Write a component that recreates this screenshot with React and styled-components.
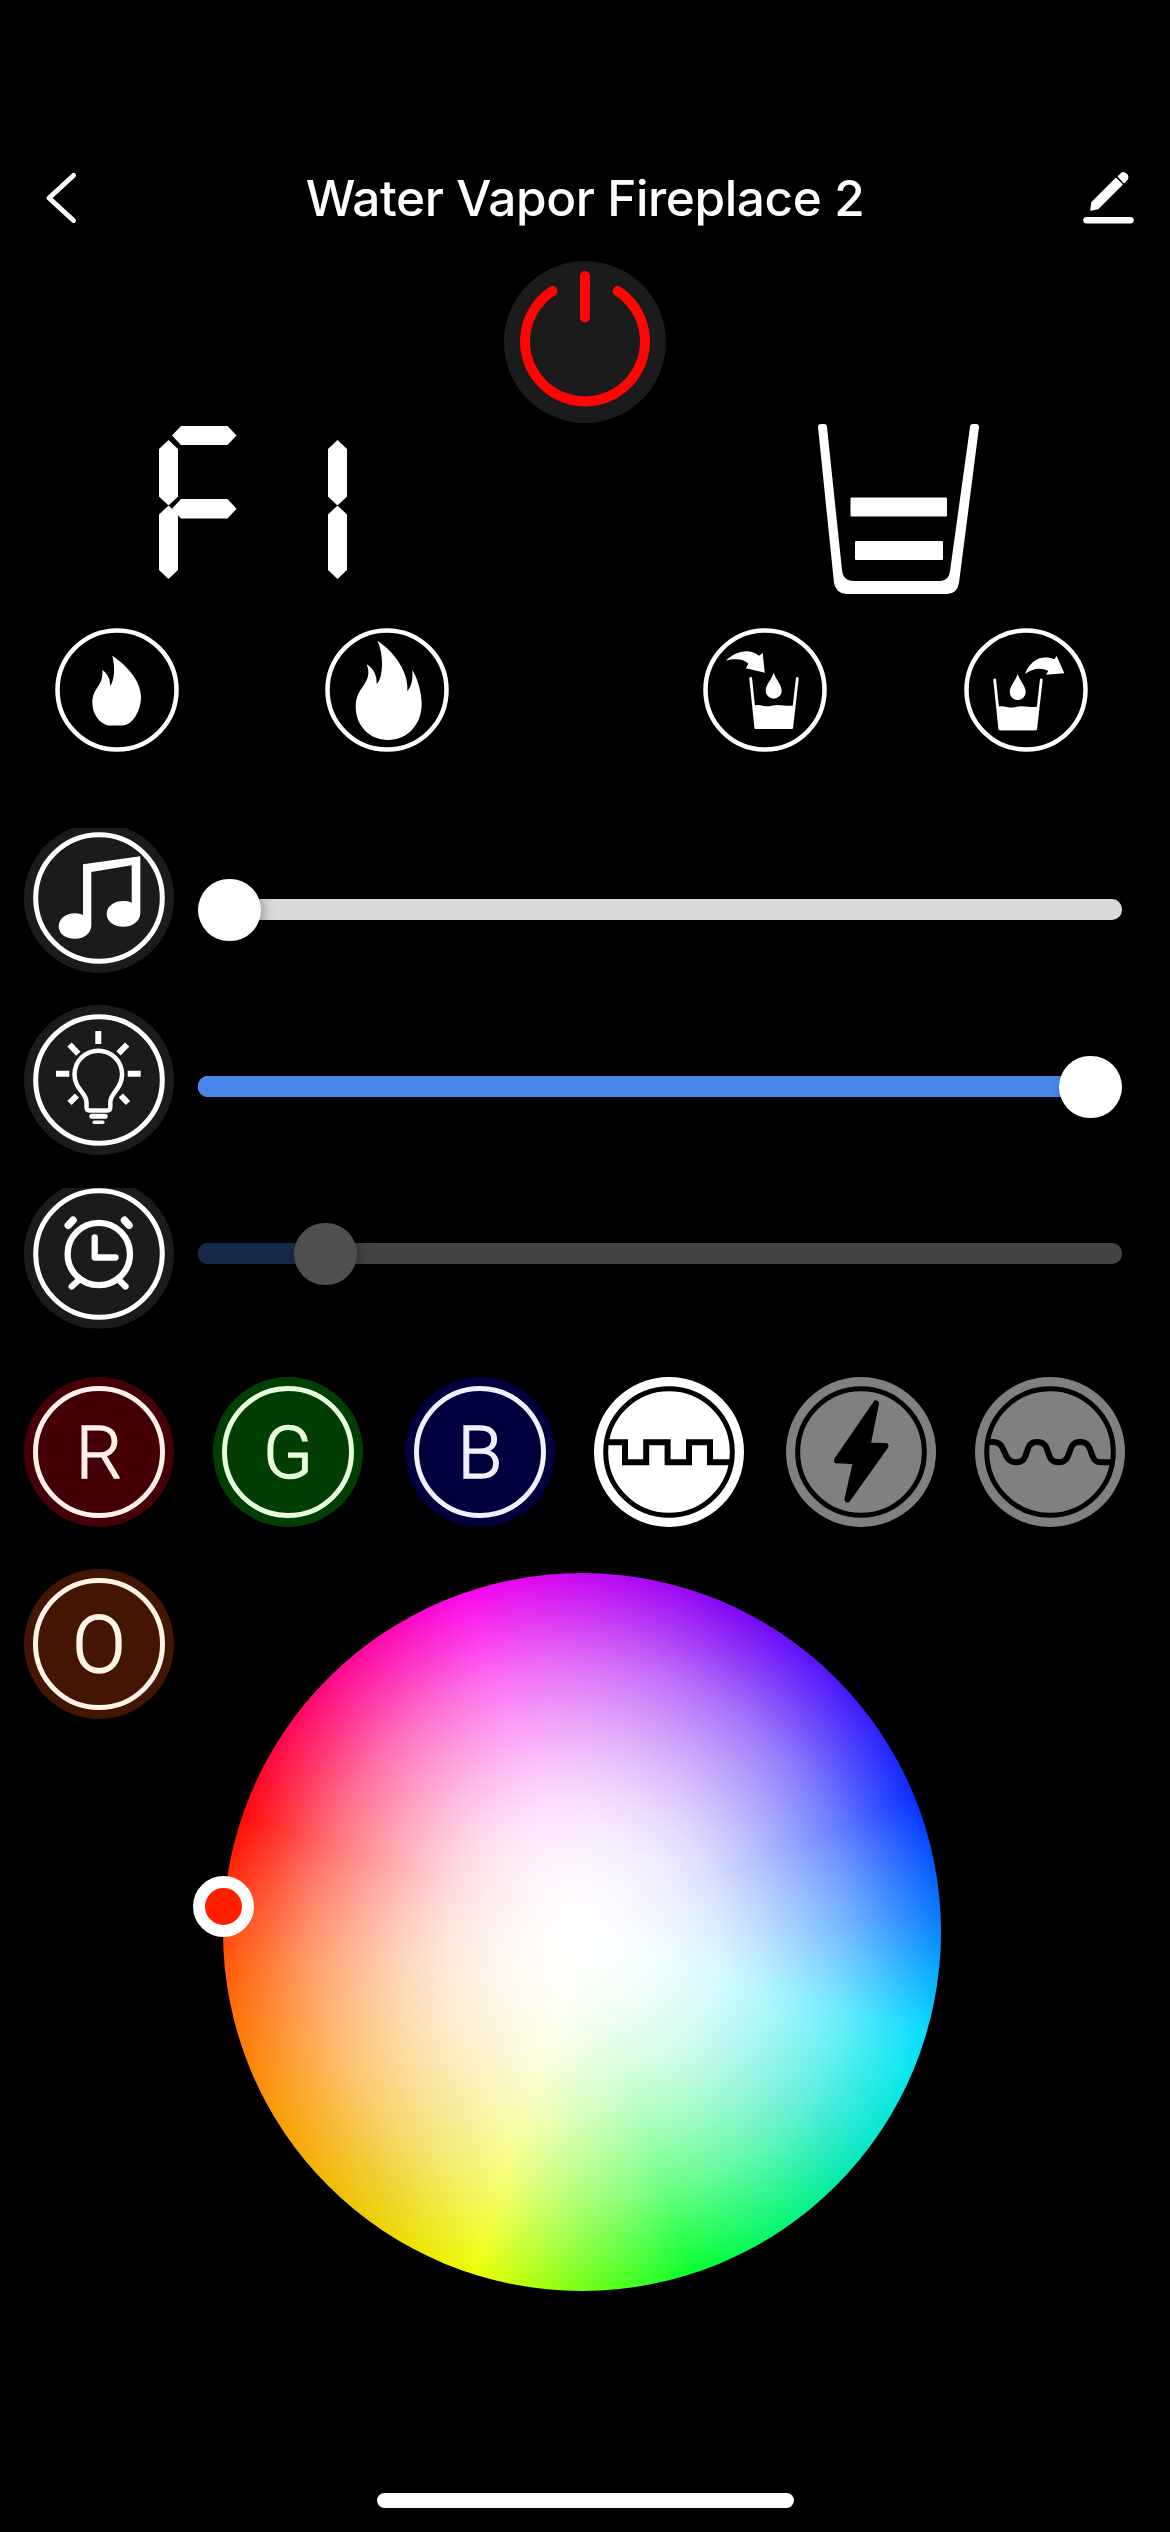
import React from "react";
import styled, { createGlobalStyle } from "styled-components";

const GlobalStyle = createGlobalStyle`
  * {
    box-sizing: border-box;
  }

  body {
    margin: 0;
    background: #000;
    font-family: Inter, "Liberation Sans", sans-serif;
  }

  svg {
    display: block;
  }
`;

const Screen = styled.div`
  width: 1170px;
  height: 2532px;
  display: flex;
  flex-direction: column;
  background: #000;
  color: #fff;
  overflow: hidden;
`;

const Header = styled.header`
  display: grid;
  grid-template-columns: 160px 1fr 160px;
  align-items: center;
  height: 104px;
  margin-top: 146px;
`;

const HeaderButton = styled.button`
  display: flex;
  justify-content: ${({ $end }) => ($end ? "flex-end" : "flex-start")};
  padding: 0 ${({ $end }) => ($end ? "34px" : "44px")};
  border: 0;
  background: none;
  color: #fff;
`;

const Title = styled.h1`
  margin: 0;
  font-size: 49.5px;
  font-weight: 500;
  line-height: 60px;
  letter-spacing: -0.4px;
  text-align: center;
  white-space: nowrap;
`;

const PowerButton = styled.button`
  width: 162px;
  height: 162px;
  margin: 11px auto 0;
  padding: 0;
  border: 0;
  border-radius: 50%;
  background: #1b1b1b;
`;

const Readouts = styled.section`
  display: flex;
  justify-content: space-between;
  height: 174px;
  padding: 1px 190px 0 159px;
`;

const DigitDisplay = styled.div`
  display: flex;
  gap: 7px;
  padding-top: 2px;
`;

const Digit = styled.div`
  display: grid;
  grid-template-columns: 13px 6px 52.5px 6px 13px;
  grid-template-rows: 14px 5px 54px 6.5px 7.5px 5.5px 54px 6.5px 13px;
`;

const Segment = styled.span`
  grid-area: ${({ $area }) => $area};
  background: #fff;
  clip-path: ${({ $flat }) =>
    $flat
      ? "polygon(0 50%, 9px 0, calc(100% - 9px) 0, 100% 50%, calc(100% - 9px) 100%, 9px 100%)"
      : "polygon(50% 0, 100% 9px, 100% calc(100% - 9px), 50% 100%, 0 calc(100% - 9px), 0 9px)"};
`;

const ActionRow = styled.section`
  display: grid;
  grid-template-columns: 270px 377.5px 261.5px 124px;
  margin-top: 31px;
  padding-left: 55px;
`;

const RingButton = styled.button`
  width: 124px;
  height: 124px;
  padding: 0;
  border: 0;
  background: none;
  color: #fff;
`;

const Sliders = styled.section`
  display: flex;
  flex-direction: column;
  gap: 32px;
  margin-top: 71px;
  padding: 0 48px 0 24px;
`;

const SliderRow = styled.div`
  display: flex;
  gap: 24px;
  height: 150px;
  margin-bottom: ${({ $tight }) => ($tight ? "-8.5px" : "0")};
`;

const Disc = styled.button`
  flex: none;
  width: 150px;
  height: 150px;
  padding: 0;
  border: 0;
  border-radius: 50%;
  background: ${({ $bg }) => $bg || "#1b1b1b"};
  color: ${({ $fg }) => $fg || "#fff"};
  clip-path: inset(${({ $cut }) => $cut || 0}px 0 0 0);
`;

const Slider = styled.div`
  position: relative;
  width: 924px;
  height: 62px;
  margin-top: ${({ $offset }) => $offset}px;
  display: flex;
  align-items: center;
  opacity: ${({ $disabled }) => ($disabled ? 0.31 : 1)};
`;

const Track = styled.div`
  width: 100%;
  height: 21px;
  border-radius: 10px;
  background: #dadada;
  overflow: hidden;
`;

const Fill = styled.div`
  height: 100%;
  background: #4b86ea;
`;

const Thumb = styled.div`
  position: absolute;
  top: 0;
  width: 62.5px;
  height: 62.5px;
  border-radius: 50%;
  background: #fff;
  box-shadow: 3px 3px 12px rgba(0, 0, 0, 0.3);
`;

const ModeRow = styled.section`
  display: grid;
  grid-template-columns: 189px 192px 189px 192px 189px 150px;
  margin-top: 48.5px;
  padding-left: 24px;
`;

const LetterRing = styled.span`
  display: flex;
  align-items: center;
  justify-content: center;
  width: 132px;
  height: 132px;
  margin: 0 auto;
  padding-top: 2px;
  border: 5px solid currentColor;
  border-radius: 50%;
  font-family: Roboto, "Liberation Sans", sans-serif;
  font-size: ${({ $size }) => $size || 73}px;
  font-weight: 300;
  line-height: 1;
  -webkit-text-stroke: 1.4px currentColor;
`;

const PickerRow = styled.section`
  display: flex;
  align-items: flex-start;
  gap: 49px;
  margin-top: 42px;
  padding-left: 24px;
`;

const Wheel = styled.div`
  position: relative;
  width: 718px;
  height: 718px;
  margin-top: 4px;
  border-radius: 50%;
  background:
    radial-gradient(
      closest-side,
      rgba(255, 255, 255, 1) 0%,
      rgba(255, 255, 255, 0.98) 12%,
      rgba(255, 255, 255, 0.94) 25%,
      rgba(255, 255, 255, 0.86) 38%,
      rgba(255, 255, 255, 0.74) 50%,
      rgba(255, 255, 255, 0.6) 62%,
      rgba(255, 255, 255, 0.43) 75%,
      rgba(255, 255, 255, 0.23) 87%,
      rgba(255, 255, 255, 0.03) 100%
    ),
    conic-gradient(
      #c400f0 0deg,
      #7800f5 27deg,
      #3a14fa 50deg,
      #0028ff 68deg,
      #0078ff 88deg,
      #00d8ff 106deg,
      #00e6ee 113deg,
      #00e6c3 128deg,
      #00f573 145deg,
      #00ff28 162deg,
      #6eff0f 180deg,
      #ebff00 197deg,
      #ebcd00 216deg,
      #fa9600 240deg,
      #ff5a00 263deg,
      #ff0000 289deg,
      #ff0082 315deg,
      #fa00eb 341deg,
      #c400f0 360deg
    );
`;

const WheelMarker = styled.div`
  position: absolute;
  top: 303px;
  left: -30px;
  width: 61px;
  height: 61px;
  border: 12px solid #fff;
  border-radius: 50%;
  background: #ff1e00;
`;

const HomeBar = styled.div`
  width: 417px;
  height: 15px;
  margin: auto auto 24px;
  border-radius: 8px;
  background: #fff;
`;

const segmentAreas = {
  a: "1 / 2 / 3 / 5",
  b: "2 / 4 / 5 / 6",
  c: "5 / 4 / 9 / 6",
  d: "8 / 2 / 10 / 5",
  e: "5 / 1 / 9 / 3",
  f: "2 / 1 / 5 / 3",
  g: "4 / 2 / 7 / 5",
};

const digits = ["aefg", "bc"];

const CUP = "M47.7 50.5 52.8 99.5H88.7L94.3 50.5";

const PouringCup = () => (
  <>
    <path d={CUP} fill="none" stroke="currentColor" strokeWidth="2.8" strokeLinecap="round" strokeLinejoin="round" />
    <path d="M50.8 77.3q4.500-.8 9 .4t9 0 9-.4 13 .2L88.700 101H53Z" fill="currentColor" />
    <path d="M70.700 44.700C73 51.500 78.700 57 78.700 62.700a8 8 0 0 1-16 0C62.700 57 68.400 51.500 70.700 44.700Z" fill="currentColor" />
  </>
);

const actions = [
  {
    name: "Low flame",
    icon: (
      <path
        fill="currentColor"
        d="M57.300 27.700C70 36 86 52 86 69C86 82 78 97.500 67 97.500H53C44 95 37.300 86 37.300 74C37.300 64 43 60 46 53C47.500 49 47.500 45 47.300 42C53 46 55.500 52 55 58C60 52 60 38 57.300 27.700Z"
      />
    ),
  },
  {
    name: "High flame",
    icon: (
      <path
        fill="currentColor"
        d="M52.300 12.700C70 24 84 45 82.300 63C87 58 88 50 87.300 42C92 49 96.700 64 96.700 76C96.700 97 82 112 63 112C45 112 30.700 98 30.700 79C30.700 69 34 64 38.500 57.500C44 49.500 44.500 45 41.700 36.300C48 40 52 47 51.700 56C59 49 58.500 25 52.300 12.700Z"
      />
    ),
  },
  {
    name: "Fill water",
    icon: (
      <>
        <path fill="currentColor" d="M22.700 32.700C33 23 46 20 56 27.700L59.700 25L61.700 44.700L43 40.300L45.300 35.500C41 31.500 33 30 22.700 32.700Z" />
        <PouringCup />
      </>
    ),
  },
  {
    name: "Drain water",
    icon: (
      <>
        <path fill="currentColor" d="M61 46C66 32 78 26 90.300 31.300L92.700 28L100.300 45.300L82 46.700L84.300 43C76 39 68 41 61 46Z" />
        <g transform="translate(-17 1.300)">
          <PouringCup />
        </g>
      </>
    ),
  },
];

const MusicIcon = () => (
  <path
    fill="currentColor"
    d="M59 41.300L116.300 33.300V90C116.300 98 109 103.700 99.500 103.700C89 103.700 82.700 98 82.700 91C82.700 84 89 78 99.500 78C103 78 106 78.700 107.700 79.700V42.300L67.300 49V102C67.300 110 61 115.700 51 115.700C41 115.700 34.700 110.500 34.700 103.500C34.700 96 41.500 90.300 51 90.300C54 90.300 57 91 59 92Z"
  />
);

const BulbIcon = () => (
  <g fill="none" stroke="currentColor">
    <path
      strokeWidth="4.500"
      d="M65 105.500C62.500 105.500 62.500 104 62.500 101.500V97C62.500 88 50.500 84 50.500 69.500A23.800 23.800 0 0 1 98.100 69.500C98.100 84 86.300 88 86.300 97V101.500C86.300 104 86.300 105.500 83.800 105.500Z"
    />
    <path strokeWidth="5" strokeLinecap="round" d="M67.800 111.300H81.200" />
    <path strokeWidth="3.500" strokeLinecap="round" d="M70.200 117.300H78.800" />
    <path
      strokeWidth="6"
      d="M74.300 26V39M32 68.700H45.300M103.700 68.700H116.700M45.500 39.500L54.300 48.800M103.200 39.500L94.500 48.300M45.500 98L52.900 90.500M96.800 90.500L104 98"
    />
  </g>
);

const AlarmIcon = () => (
  <g fill="none" stroke="currentColor" strokeWidth="6.300" strokeLinecap="round" strokeLinejoin="round">
    <circle cx="74.800" cy="75" r="31.200" />
    <path d="M70.700 58.500V78.500H91.500M54.300 101.500L47.700 107.500M96 102L101.500 107.500" />
    <path strokeWidth="7.500" d="M44.300 46.200L49 41.200M100.500 41.200L105 46.200" />
  </g>
);

const sliders = [
  { name: "Volume", Icon: MusicIcon, cut: 5, offset: 55.5, fill: 0, thumb: 0 },
  { name: "Brightness", Icon: BulbIcon, offset: 50.5, fill: 895, thumb: 861, tight: true },
  { name: "Timer", Icon: AlarmIcon, cut: 9.5, offset: 44, fill: 120, thumb: 96, disabled: true },
];

const modes = [
  { name: "Red", letter: "R", bg: "#440004", fg: "#fff0e9" },
  { name: "Green", letter: "G", bg: "#003e02", fg: "#e9ffdf" },
  { name: "Blue", letter: "B", bg: "#00003e", fg: "#f0f0ff" },
  {
    name: "Square wave",
    bg: "#fff",
    fg: "#000",
    icon: <path strokeWidth="6" d="M12 65.300H31V85.300H52.200V65.300H73.600V85.300H95V65.300H116V85.300H137" />,
  },
  {
    name: "Flash",
    bg: "#808080",
    fg: "#000",
    icon: (
      <path
        fill="currentColor"
        strokeWidth="6"
        d="M90 26.500L81.500 68.500L99.500 69L61.500 122.500L70 84.300L51 83.300Z"
      />
    ),
  },
  {
    name: "Smooth wave",
    bg: "#808080",
    fg: "#000",
    icon: (
      <path
        strokeWidth="6"
        d="M12 65H18C33 65 26 85.300 41.200 85.300S47 65 62.300 65S68.500 85.300 83.700 85.300S90 65 105.200 65S112 85.300 126 85.300H137"
      />
    ),
  },
];

const LevelCup = () => (
  <svg width="162" height="172" viewBox="0 0 162 172" fill="#fff">
    <path d="M0 3Q0 0 3 0H6Q9 0 9 3L24 146Q25 157 36 157H123Q131 156 132 147L152 3Q152 0 155 0H158Q161 0 161 3L141 159Q139 170 129 170H28Q18 169 16 159Z" />
    <rect x="32.500" y="73.500" width="96.500" height="19" rx="1" />
    <rect x="37" y="117" width="88" height="19" rx="1" />
  </svg>
);

const App = () => {
  return (
    <>
      <GlobalStyle />
      <Screen>
        <Header>
          <HeaderButton aria-label="Back">
            <svg width="34" height="54" viewBox="0 0 34 54" fill="none" stroke="currentColor" strokeWidth="5" strokeLinecap="round" strokeLinejoin="round">
              <path d="M29.500 4.500L5 27L29.500 49.500" />
            </svg>
          </HeaderButton>
          <Title>Water Vapor Fireplace 2</Title>
          <HeaderButton $end aria-label="Edit">
            <svg width="54" height="54" viewBox="0 0 54 54" fill="none" stroke="currentColor" strokeLinecap="round">
              <path strokeWidth="6.500" d="M4.500 49.300H48.500" />
              <path strokeWidth="1.500" strokeLinejoin="round" fill="currentColor" d="M9 39L10 31.500L34 7.500L40 13.500L16 37.500ZM36.500 5.500L40 2Q42.500 1 45 4Q46.500 6.500 44.500 9L42 11.500Z" />
            </svg>
          </HeaderButton>
        </Header>

        <PowerButton aria-label="Power">
          <svg width="162" height="162" viewBox="0 0 162 162" fill="none" stroke="#fe0606" strokeWidth="10" strokeLinecap="round">
            <path d="M81 15V56.500M48.500 30A60 60 0 1 0 113.500 30" />
          </svg>
        </PowerButton>

        <Readouts>
          <DigitDisplay>
            {digits.map((lit, index) => (
              <Digit key={`digit-${index}`}>
                {lit.split("").map((id) => (
                  <Segment key={id} $area={segmentAreas[id]} $flat={"adg".includes(id)} />
                ))}
              </Digit>
            ))}
          </DigitDisplay>
          <LevelCup />
        </Readouts>

        <ActionRow>
          {actions.map(({ name, icon }) => (
            <RingButton key={name} aria-label={name}>
              <svg width="124" height="124" viewBox="0 0 124 124">
                <circle cx="62" cy="62" r="59.500" fill="none" stroke="currentColor" strokeWidth="4.500" />
                {icon}
              </svg>
            </RingButton>
          ))}
        </ActionRow>

        <Sliders>
          {sliders.map(({ name, Icon, cut, offset, fill, thumb, tight, disabled }) => (
            <SliderRow key={name} $tight={tight}>
              <Disc $cut={cut} aria-label={name}>
                <svg width="150" height="150" viewBox="0 0 150 150">
                  <circle cx="75" cy="75" r="63.300" fill="none" stroke="currentColor" strokeWidth="5" />
                  <Icon />
                </svg>
              </Disc>
              <Slider $offset={offset} $disabled={disabled}>
                <Track>
                  <Fill style={{ width: fill }} />
                </Track>
                <Thumb style={{ left: thumb }} />
              </Slider>
            </SliderRow>
          ))}
        </Sliders>

        <ModeRow>
          {modes.map(({ name, letter, bg, fg, icon }) => (
            <Disc key={name} $bg={bg} $fg={fg} aria-label={name}>
              {letter ? (
                <LetterRing>{letter}</LetterRing>
              ) : (
                <svg width="150" height="150" viewBox="0 0 150 150" fill="none" stroke="currentColor" strokeLinejoin={name === "Square wave" ? "miter" : "round"}>
                  <circle cx="75" cy="75" r="63.300" strokeWidth="5" />
                  {icon}
                </svg>
              )}
            </Disc>
          ))}
        </ModeRow>

        <PickerRow>
          <Disc $bg="#431503" $fg="#fff2e7" aria-label="Orange">
            <LetterRing $size={79}>O</LetterRing>
          </Disc>
          <Wheel>
            <WheelMarker />
          </Wheel>
        </PickerRow>

        <HomeBar />
      </Screen>
    </>
  );
};

export default App;
